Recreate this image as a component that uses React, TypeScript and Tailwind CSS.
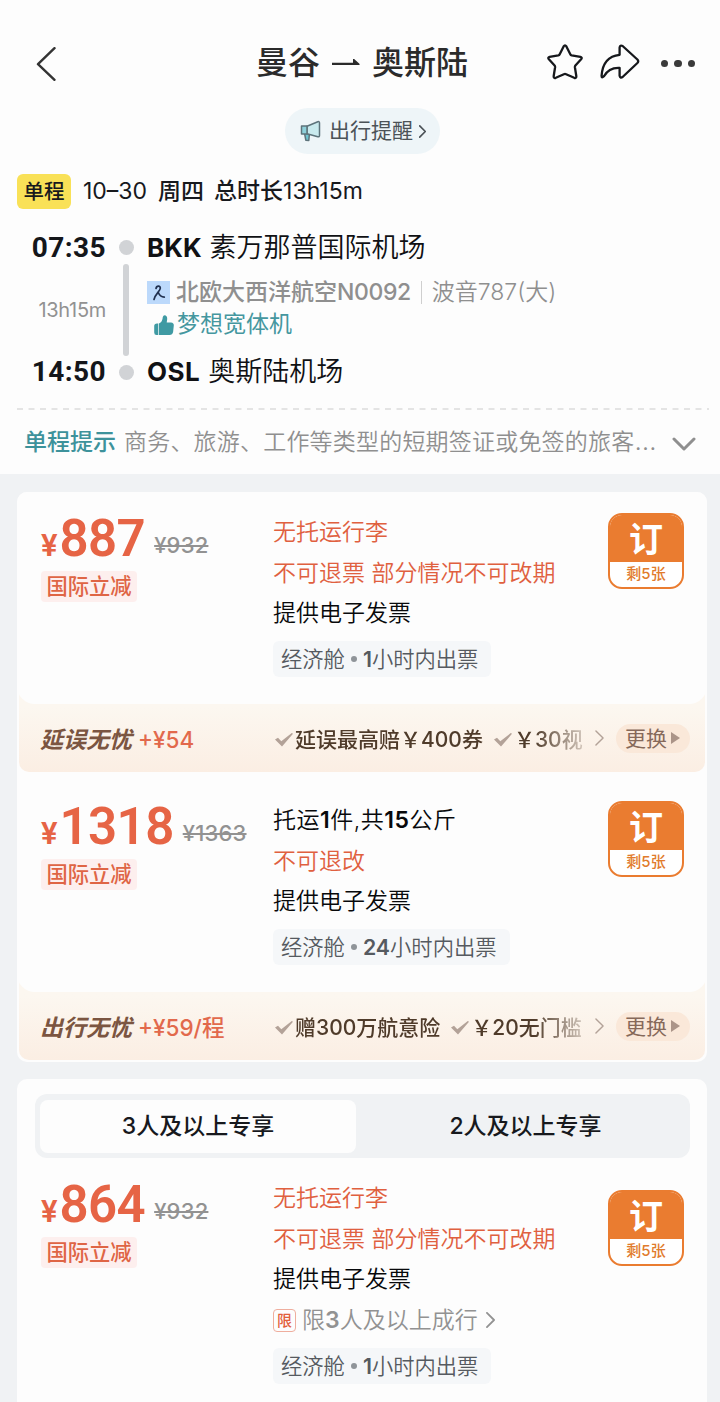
import { ReactNode, useState } from "react"
import clsx from "clsx"


type BenefitType = {
    title: string,
    price: string,
    items: string[],
}

type FareType = {
    id: number,
    price: string,
    oldPrice: string,
    rules: { msg: ReactNode, warn: boolean }[],
    limit?: ReactNode,
    issueTime: ReactNode,
    benefit?: BenefitType,
}


const fares: FareType[] = [
    {
        id: 1,
        price: "887",
        oldPrice: "¥932",
        rules: [
            { msg: "无托运行李", warn: true },
            { msg: "不可退票 部分情况不可改期", warn: true },
            { msg: "提供电子发票", warn: false },
        ],
        issueTime: <><b className="font-semibold">1</b>小时内出票</>,
        benefit: { title: "延误无忧", price: "+¥54", items: ["延误最高赔￥400券", "￥30视"] },
    },
    {
        id: 2,
        price: "1318",
        oldPrice: "¥1363",
        rules: [
            { msg: <span className="tracking-[0.5px]">托运<b className="font-semibold">1</b>件,共<b className="font-semibold">15</b>公斤</span>, warn: false },
            { msg: "不可退改", warn: true },
            { msg: "提供电子发票", warn: false },
        ],
        issueTime: <><b className="font-semibold">24</b>小时内出票</>,
        benefit: { title: "出行无忧", price: "+¥59/程", items: ["赠300万航意险", "￥20无门槛"] },
    },
]

const groupFare: FareType = {
    id: 3,
    price: "864",
    oldPrice: "¥932",
    rules: fares[0].rules,
    limit: <>限<b className="font-semibold">3</b>人及以上成行</>,
    issueTime: <><b className="font-semibold">1</b>小时内出票</>,
}

const tabs = ["3人及以上专享", "2人及以上专享"];


const Chevron = ({ className, width = 2 }: { className: string, width?: number }) => (
    <svg viewBox="0 0 10 18" fill="none" stroke="currentColor" strokeWidth={width} strokeLinecap="round" strokeLinejoin="round" className={className}>
        <path d="M1 1l8 8-8 8" />
    </svg>
)

const Tick = () => (
    <svg viewBox="0 0 18 14" className="w-[18px] h-3.5 shrink-0 fill-[#b3a298]">
        <path d="M0 6.5l3-1.8 3.3 3.6L16.8 0 18 .8 7 13.6z" />
    </svg>
)


const Header = () => (
    <div className="h-[108px] pt-9 pl-9 pr-[25px] flex items-start">
        <div className="w-[220px] h-[55px] flex items-center">
            <svg viewBox="0 0 20 34" fill="none" stroke="#333" strokeWidth="2.4" strokeLinecap="round" strokeLinejoin="round" className="w-5 h-[34px]">
                <path d="M18.5 1.2L2 17.2l16.5 15.6" />
            </svg>
        </div>
        <h1 className="h-[53px] flex items-center text-[32px] leading-[53px] font-medium text-[#2b2b2b] whitespace-nowrap">
            曼谷
            <svg viewBox="0 0 28 8" className="w-7 h-2 mx-3 fill-[#2b2b2b]">
                <path d="M0 3.7h21V-.2q0-.7.8-.1L27.400 4.700q1 1.300-.6 1.300H0z" />
            </svg>
            奥斯陆
        </h1>
        <div className="ml-auto h-[52px] flex items-center">
            <svg viewBox="0 0 36 36" fill="none" stroke="#16181c" strokeWidth="2.300" strokeLinejoin="round" className="w-9 h-9">
                <path d="M16.600 2.400Q18 .2 19.400 2.400L23.300 10.300Q23.700 11.200 24.700 11.400L33.400 12.900Q35.600 13.500 34.100 15.300L28.400 21.600Q27.800 22.300 27.900 23.200L29.300 32Q29.500 34.600 27.200 33.800L19.100 30.200Q18 29.700 16.900 30.200L8.800 33.800Q6.500 34.600 6.700 32L8.100 23.200Q8.200 22.300 7.600 21.600L1.900 15.300Q.4 13.500 2.600 12.900L11.300 11.400Q12.300 11.200 12.700 10.300z" />
            </svg>
            <svg viewBox="0 0 40 36" fill="none" stroke="#16181c" strokeWidth="2.300" strokeLinejoin="round" className="w-10 h-9 ml-[17px]">
                <path d="M19.600 10.800V3.600Q20 .6 22.600 2L37.400 15.500Q39 17.300 37.400 19L22.600 33Q20 34.600 19.600 31.700V23.900C12.500 23.500 7.200 26.500 4 32.200Q1.500 34.600 1.600 31.700C2.400 20 8 12 19.600 10.800z" />
            </svg>
            <div className="ml-[21px] mt-[3px] flex gap-[6px]">
                {[0, 1, 2].map(i => <i key={i} className="size-[7.5px] rounded-full bg-[#3a3a3a]" />)}
            </div>
        </div>
    </div>
)


const Reminder = () => (
    <button className="mx-auto mr-[280px] w-[155px] h-[46px] rounded-full bg-[#eef5f8] flex items-center pl-[15px] text-[21px] leading-[46px] text-[#4b5257] whitespace-nowrap">
        <svg viewBox="0 0 22 22" stroke="#5d737b" strokeWidth="1.5" strokeLinejoin="round" className="size-[22px] mr-[7px]">
            <path d="M4.5 13l1.3 7.2 3 .3.6-6.5z" fill="#6fc3cf" />
            <path d="M7 6.2L17.8 1.700Q19.500 1.200 19.500 3V15.500Q19.500 17.300 17.800 16.700L7 13.800z" fill="#c9eaee" />
            <path d="M1.500 6h5.500v8H1.500z" fill="#8ed0da" />
        </svg>
        出行提醒
        <Chevron className="w-[7px] h-[13px] ml-[6px]" width={2.4} />
    </button>
)


const Route = () => (
    <div className="flex h-[176px] mt-3">
        <div className="w-[106px] flex flex-col items-end text-right font-['Roboto'] text-[28px] leading-[54px] font-bold tracking-[0.4px] text-[#14161a]">
            <div className="h-[54px]">07:35</div>
            <div className="h-[70px] leading-[70px] font-['Inter'] text-[20px] font-normal tracking-[-0.3px] text-[#929292]">13h15m</div>
            <div className="h-[54px]">14:50</div>
        </div>
        <div className="w-4 ml-[12px] flex flex-col items-center">
            <i className="size-[15px] mt-[19px] rounded-full bg-[#d1d3d6]" />
            <i className="w-[6px] h-[92px] my-[9px] rounded-full bg-[#d1d3d6]" />
            <i className="size-[15px] rounded-full bg-[#d1d3d6]" />
        </div>
        <div className="ml-[13px] whitespace-nowrap">
            <div className="h-[54px] leading-[54px] text-[27px] font-[350] text-[#101114] flex">
                <b className="text-[26px] font-bold mr-2">BKK</b>素万那普国际机场
            </div>
            <div className="h-[35px] leading-[35px] text-[23px] text-[#8f8f8f] flex items-center">
                <span className="size-[23px] mr-[6px] bg-[#bcd9fb] flex justify-center items-center">
                    <svg viewBox="0 0 14 16" fill="none" stroke="#20304f" strokeWidth="1.7" strokeLinecap="round" className="w-3.5 h-4">
                        <path d="M4 3.5C4.5.5 8.5.3 8.300 3.200 8 6.500 3.500 8.500 2 14.500M6.300 7.500C7.500 10.500 9 12 12.300 12.200" />
                    </svg>
                </span>
                <span className="font-medium">北欧大西洋航空<span className="tracking-[-0.4px]">N0092</span></span>
                <i className="w-px h-[23px] mx-[10px] bg-[#cfcfcf]" />
                <span className="font-[350]">波音787(大)</span>
            </div>
            <div className="h-[35px] leading-[28px] pl-[7px] text-[23px] text-[#45979f] flex">
                <svg viewBox="0 0 20 20" className="size-5 mt-[5px] mr-[3px] fill-[#3f9aa3]">
                    <path d="M3 8.500h1.300V20H2.500Q.2 20 .2 17.500V11Q.2 8.500 3 8.500zM5 8.500Q8.500 7 8.800 2 9.200 0 11 .2 13.300.6 13.200 4L12.700 7.500H17Q20 7.800 19.800 10.500l-.7 6.500Q18.500 20 15.500 20H5z" />
                </svg>
                梦想宽体机
            </div>
            <div className="h-[54px] leading-[54px] text-[27px] font-[350] text-[#101114] flex">
                <b className="text-[26px] font-bold mr-2 tracking-[0.5px]">OSL</b>奥斯陆机场
            </div>
        </div>
    </div>
)


const Summary = () => (
    <section className="h-[474px] bg-[#fdfdfd] flex flex-col">
        <Header />
        <Reminder />
        <div className="mt-5 h-[35px] pl-[17px] flex items-center text-[23px] leading-[35px] text-[#17191d] font-medium whitespace-nowrap">
            <span className="w-[54px] h-[35px] rounded-md bg-[#f9e157] text-center text-[20.5px]">单程</span>
            <span className="ml-3 font-normal">10–30</span>
            <span className="ml-[11px]">周四</span>
            <span className="ml-[10px]">总时长<span className="font-normal">13h15m</span></span>
        </div>
        <Route />
        <svg className="ml-[17px] w-[692px] h-[2px] mt-[11px] shrink-0">
            <path d="M0 1H692" stroke="#dcdcdc" strokeWidth="1.5" strokeDasharray="6 5.5" />
        </svg>
        <div className="h-16 pl-6 pr-6 flex items-center text-[23px] leading-[66px] whitespace-nowrap">
            <span className="font-medium text-[#3d929b]">单程提示</span>
            <span className="ml-2 font-[350] text-[#8f8f8f] tracking-[0.2px]">商务、旅游、工作等类型的短期签证或免签的旅客<span className="text-[26px] leading-none">…</span></span>
            <svg viewBox="0 0 24 14" fill="none" stroke="#8f8f8f" strokeWidth="3" strokeLinecap="round" strokeLinejoin="round" className="ml-auto mt-1 w-6 h-3.5">
                <path d="M2 2l10 10L22 2" />
            </svg>
        </div>
    </section>
)


const BookButton = ({ className }: { className?: string }) => (
    <button className={clsx("w-[76px] h-[76px] shrink-0 rounded-[14px] border-2 border-[#ea7c30] bg-white overflow-hidden flex flex-col", className)}>
        <span className="w-full h-[47px] shrink-0 bg-[#ea7c30] text-white text-[34px] leading-[50px] font-bold text-center">订</span>
        <span className="w-full text-[#e17b2c] text-[15px] leading-[24px] font-medium text-center">剩5张</span>
    </button>
)


const Fare = ({ fare }: { fare: FareType }) => (
    <div className="flex pl-6 whitespace-nowrap">
        <div className="w-[232px] pt-[17px]">
            <div className="h-[62px] flex items-baseline text-[#e66445]">
                <span className="font-['Roboto'] text-[31px] leading-[59px] font-semibold">¥</span>
                <span className="ml-[2px] font-['Roboto'] text-[51px] leading-[59px] font-semibold tracking-[-0.6px]">{fare.price}</span>
                <span className="relative -top-[3px] ml-[9px] text-[22px] font-medium text-[#929292] tracking-[0.2px] line-through decoration-2">{fare.oldPrice}</span>
            </div>
            <span className="block w-24 h-[31px] rounded bg-[#fdefee] text-center text-[21.3px] leading-[31px] font-medium text-[#df6545]">国际立减</span>
        </div>
        <div className="w-[335px] pt-5 text-[23px] leading-[41px] font-[350]">
            {fare.rules.map((rule, i) => (
                <p key={i} className={clsx("h-[40.5px]", rule.warn ? "text-[#e0603f]" : "text-[#08090b]")}>{rule.msg}</p>
            ))}
            {fare.limit &&
                <div className="h-[41px] flex items-center text-[#929292]">
                    <span className="size-[23px] mr-[6px] rounded border border-[#efae9e] text-center text-[15px] leading-[22px] font-medium text-[#e2603c]">限</span>
                    {fare.limit}
                    <Chevron className="w-[9px] h-4 ml-2" />
                </div>
            }
            <div className="mt-[7px] w-fit h-9 px-2 pr-[13px] rounded-md bg-[#f5f7f9] flex items-center text-[21.3px] leading-9 text-[#555a60]">
                经济舱<i className="size-[6px] mx-[6px] rounded-full bg-[#8f9499]" /><span>{fare.issueTime}</span>
            </div>
        </div>
        <BookButton className={fare.limit ? "mt-8" : "mt-[21px]"} />
    </div>
)


const Benefit = ({ benefit }: { benefit: BenefitType }) => (
    <div className="mx-[2px] -mt-3 pt-3 h-20 rounded-b-[10px] bg-linear-to-b from-[#fcf7f0] from-20% to-[#fbeee3] flex items-center pl-[21px] pr-[15px] whitespace-nowrap">
        <div className="w-[235px] pt-1 flex items-center text-[23px] leading-[64px]">
            <span className="font-bold italic text-[#7b5541]">{benefit.title}</span>
            <span className="ml-[6px] text-[22.5px] font-medium text-[#e2694c]">{benefit.price}</span>
        </div>
        <div className="w-[308px] pt-[3px] flex items-center text-[21px] leading-[64px] font-medium text-[#4f3b2a] mask-r-from-84% mask-r-to-105%">
            {benefit.items.map((item, i) => (
                <span key={item} className={clsx("flex items-center gap-[2px]", i > 0 && "ml-[11px]")}>
                    <Tick />{item}
                </span>
            ))}
        </div>
        <Chevron className="w-[9px] h-4 ml-[12px] text-[#b3a298]" width={1.6} />
        <button className="ml-auto w-[74px] h-[29px] rounded-full bg-[#fae8d9] flex items-center pl-[9px] text-[21px] leading-[29px] text-[#86695a]">
            更换
            <svg viewBox="0 0 9 12" className="w-[9px] h-3 ml-1 fill-[#ab9488]"><path d="M0 0l9 6-9 6z" /></svg>
        </button>
    </div>
)


const GroupCard = () => {

    const [active, setActive] = useState<number>(0);

    return (
        <div className="mt-[17px] h-[342px] rounded-t-[10px] bg-[#fdfdfd] pt-[15px]">
            <div className="ml-[18px] w-[655px] h-16 rounded-xl bg-[#f0f2f4] p-[5px] flex items-center">
                {tabs.map((tab, i) => (
                    <button
                        key={tab}
                        onClick={() => setActive(i)}
                        className={clsx("h-[53px] text-[23px] leading-[51px] font-medium text-[#17191d] rounded-lg", active === i ? "w-[316px] bg-[#fdfdfd]" : "flex-1 pl-[10px]")}
                    >
                        {tab}
                    </button>
                ))}
            </div>
            <Fare fare={groupFare} />
        </div>
    )
}


const App = () => (
    <main className="w-[720px] h-[1402px] overflow-hidden bg-[#f0f2f4] font-['Inter','Noto_Sans_CJK_SC',sans-serif]">
        <Summary />
        <div className="mt-[18px] ml-[17px] w-[690px]">
            <div className="rounded-[10px] bg-[#fdfdfd] pb-[2px]">
                {fares.map((fare, i) => (
                    <div key={fare.id} className={clsx(i > 0 && "pt-2")}>
                        <div className="relative z-10 h-[212px] rounded-b-[18px] rounded-t-[10px] bg-[#fdfdfd]"><Fare fare={fare} /></div>
                        {fare.benefit && <Benefit benefit={fare.benefit} />}
                    </div>
                ))}
            </div>
            <GroupCard />
        </div>
    </main>
)

export default App
